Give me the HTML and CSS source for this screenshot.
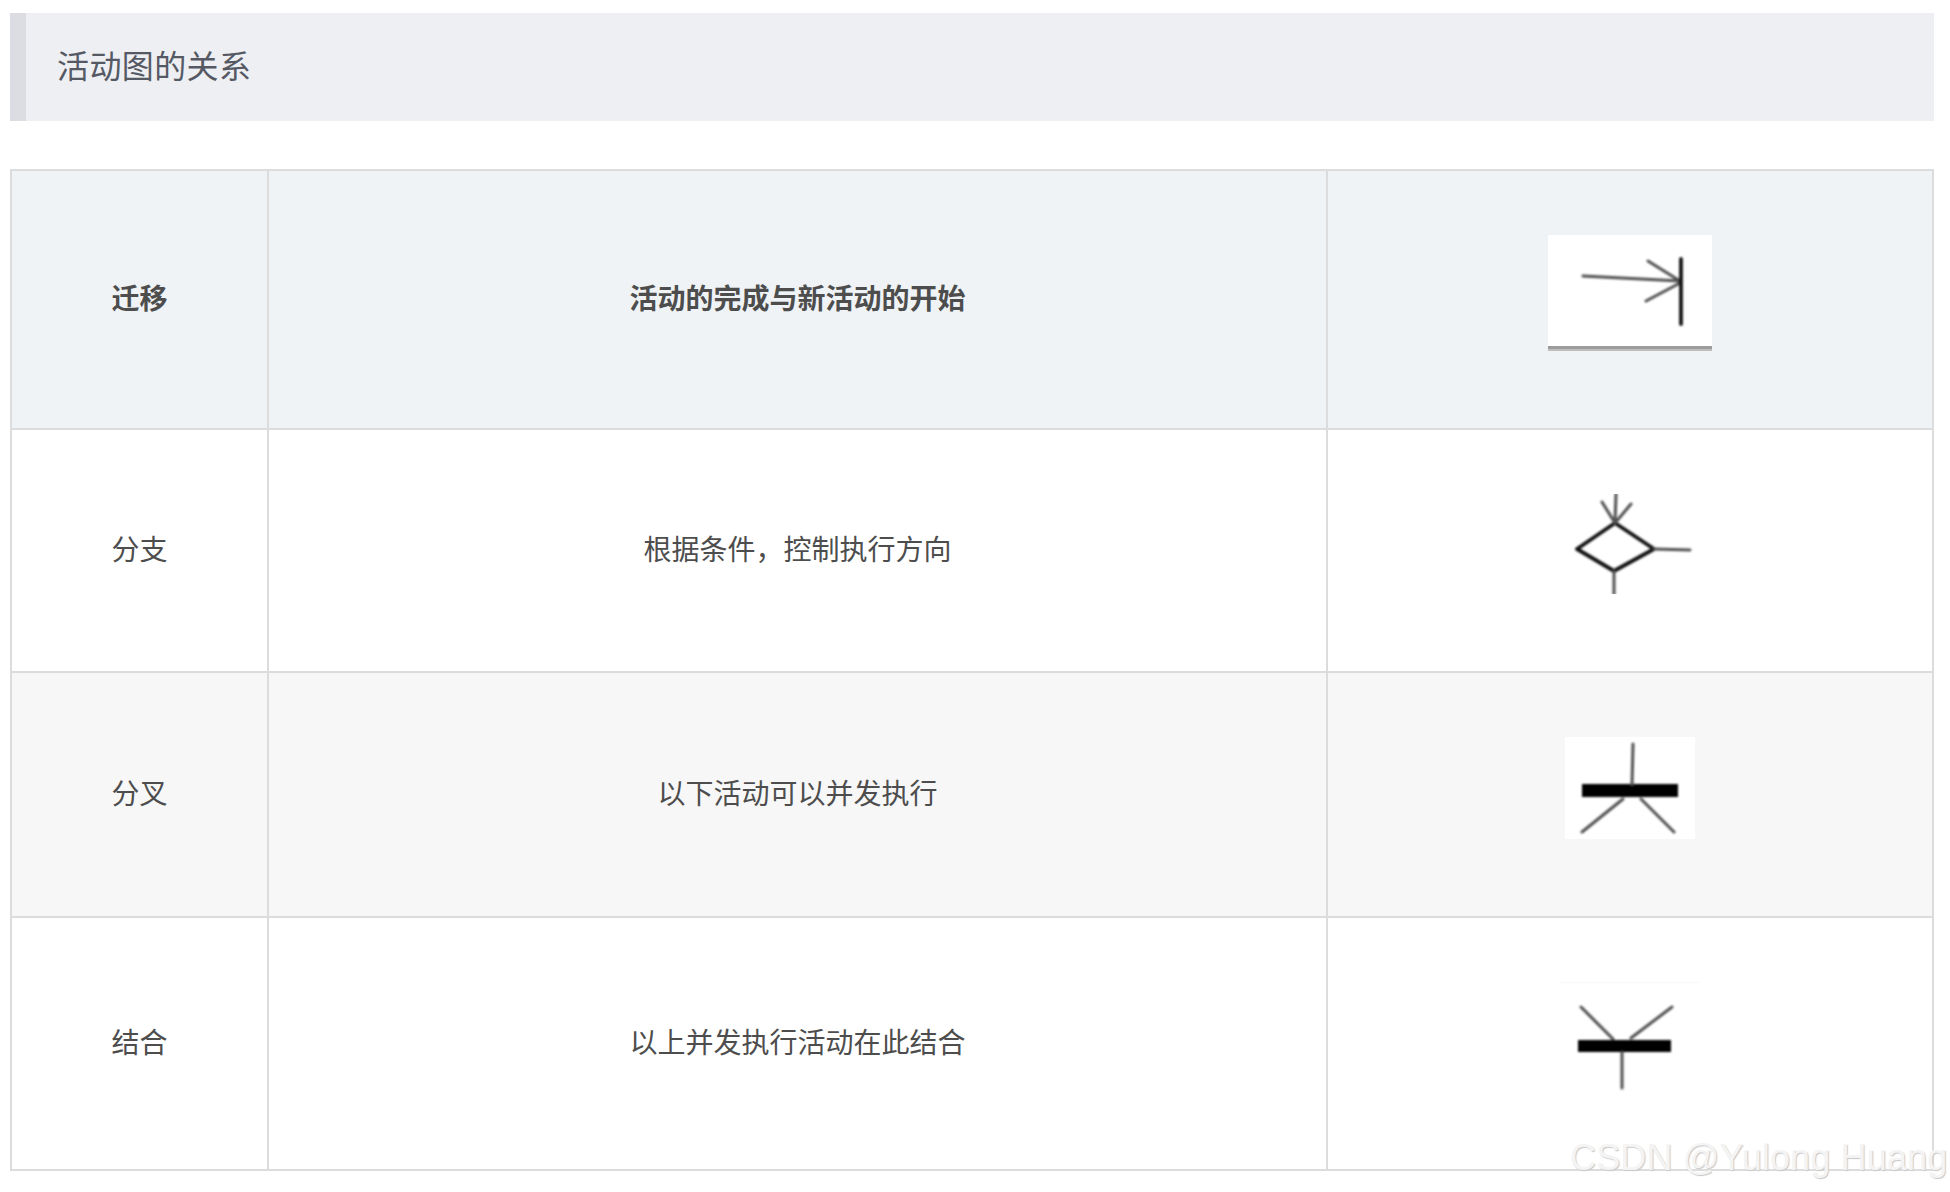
FILE: index.html
```html
<!DOCTYPE html>
<html lang="zh-CN">
<head>
<meta charset="utf-8">
<title>活动图的关系</title>
<link rel="stylesheet" href="styles.css">
</head>
<body>
<blockquote class="heading">活动图的关系</blockquote>
<table class="rel-table">
<colgroup><col class="col-name"><col class="col-desc"><col class="col-icon"></colgroup>
<thead>
<tr>
<th class="txt">迁移</th>
<th class="txt">活动的完成与新活动的开始</th>
<th>
<svg class="sym sym-white" width="164" height="116" viewBox="0 0 164 116">
<rect class="rule-a" x="0" y="111" width="164" height="3"/>
<rect class="rule-b" x="0" y="114" width="164" height="2"/>
<g class="soft">
<path class="ln" d="M35 41 L132 46 M100 26 L132 46 M98 66 L132 48"/>
<path class="ln-dark" d="M133 24 L133 89"/>
</g>
</svg>
</th>
</tr>
</thead>
<tbody>
<tr>
<td class="txt">分支</td>
<td class="txt">根据条件，控制执行方向</td>
<td>
<svg class="sym" width="130" height="100" viewBox="0 0 130 100">
<g class="soft">
<path class="ln-dark" d="M12 55 L50 29 L89 55 L49 77 Z"/>
<path class="ln" d="M51 0 L50 29 M37 8 L50 29 M66 10 L50 29 M89 55 L125 56 M49 77 L49 100"/>
</g>
</svg>
</td>
</tr>
<tr class="striped">
<td class="txt">分叉</td>
<td class="txt">以下活动可以并发执行</td>
<td>
<svg class="sym sym-white" width="130" height="102" viewBox="0 0 130 102">
<g class="soft">
<rect class="bar" x="17" y="47" width="96" height="13"/>
<path class="ln" d="M68 7 L67 48 M58 62 L17 95 M76 62 L109 95"/>
</g>
</svg>
</td>
</tr>
<tr>
<td class="txt">结合</td>
<td class="txt">以上并发执行活动在此结合</td>
<td>
<svg class="sym" width="140" height="110" viewBox="0 0 140 110">
<rect class="rule-c" x="0" y="0" width="140" height="1"/>
<g class="soft">
<rect class="bar" x="18" y="58" width="93" height="12"/>
<path class="ln" d="M21 25 L53 57 M112 25 L71 56 M62 70 L62 106"/>
</g>
</svg>
</td>
</tr>
</tbody>
</table>
<div class="watermark">CSDN @Yulong Huang</div>
</body>
</html>
```

FILE: styles.css
```css
html, body {
  overflow: hidden;
}

body {
  margin: 13px 16px 0 10px;
  background: #fff;
  color: #4d4d4d;
  font-family: "Noto Sans CJK SC", "Liberation Sans", sans-serif;
  font-size: 28px;
}

.heading {
  margin: 0 0 48px;
  padding: 24px 32px 30px 31px;
  border-left: 16px solid #dcdde2;
  background: #eeeff3;
  color: #555963;
  font-size: 32px;
  letter-spacing: 0.4px;
  line-height: 54px;
}

.rel-table {
  width: 1924px;
  table-layout: fixed;
  border-collapse: separate;
  border-spacing: 0;
  border-top: 2px solid #dcdcdc;
  border-left: 2px solid #dcdcdc;
}

.col-name { width: 257px; }
.col-desc { width: 1059px; }
.col-icon { width: 606px; }

.rel-table th,
.rel-table td {
  padding: 64px 0;
  border-right: 2px solid #dcdcdc;
  border-bottom: 2px solid #dcdcdc;
  text-align: center;
  vertical-align: middle;
  font-size: 28px;
  line-height: 40px;
}

.rel-table .txt {
  padding: 0 0 5px;
}

.rel-table th {
  background: #eff3f6;
  font-weight: 700;
}

.striped td {
  background: #f7f7f7;
}

.sym {
  display: block;
  margin: 0 auto 13px;
}

.sym-white {
  background: #fff;
}

.soft {
  filter: blur(1px);
}

.ln {
  fill: none;
  stroke: #505050;
  stroke-width: 3;
  stroke-linecap: round;
}

.ln-dark {
  fill: none;
  stroke: #111;
  stroke-width: 3.8;
  stroke-linecap: round;
  stroke-linejoin: round;
}

.bar {
  fill: #000;
}

.rule-a { fill: #9c9c9c; }
.rule-b { fill: #bdbdbd; }
.rule-c { fill: #f8f8f8; }

.watermark {
  position: absolute;
  left: 1570px;
  top: 1136px;
  font-family: "Liberation Sans", sans-serif;
  font-size: 36px;
  letter-spacing: 0.15px;
  line-height: 44px;
  white-space: nowrap;
  color: #f4f4f4;
  text-shadow: 1px 1px 1px #c8c8c8;
}
```
